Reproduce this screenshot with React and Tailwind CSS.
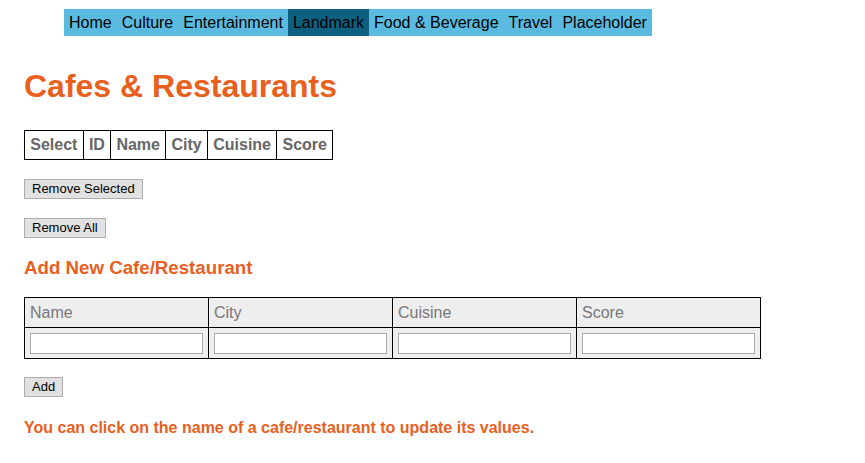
export default function App() {
  const nav = ["Home", "Culture", "Entertainment", "Landmark", "Food & Beverage", "Travel", "Placeholder"];
  const orange = "text-[#e95f1e]";
  const btn = "block h-[20px] border border-[#adadad] bg-[#e1e1e1] px-[7px] text-[13px] leading-[18px]";
  return (
    <div className="min-h-[463px] bg-white px-6 font-['Liberation_Sans',Arial,sans-serif] text-black">
      <ul className="ml-10 flex w-fit pt-[9px]">
        {nav.map((n) => (
          <li
            key={n}
            className={`h-[27px] px-[5px] text-[16px] leading-[27px] ${n === "Landmark" ? "bg-[#0f6080]" : "bg-[#5bbadf]"}`}
          >
            {n}
          </li>
        ))}
      </ul>
      <h1 className={`mt-[32px] text-[32px] font-bold leading-[37px] ${orange}`}>Cafes &amp; Restaurants</h1>
      <table className="mt-[25px] border-collapse">
        <thead>
          <tr>
            {["Select", "ID", "Name", "City", "Cuisine", "Score"].map((h) => (
              <th key={h} className="border border-black px-[5.25px] py-[5px] text-left text-[16px] font-bold leading-[18px] text-[#666666]">
                {h}
              </th>
            ))}
          </tr>
        </thead>
      </table>
      <button className={`mt-[19px] ${btn}`}>Remove Selected</button>
      <button className={`mt-[19px] ${btn}`}>Remove All</button>
      <h3 className={`mt-[19px] text-[18.7px] font-bold leading-[22px] ${orange}`}>Add New Cafe/Restaurant</h3>
      <table className="mt-[18px] w-[737px] table-fixed border-collapse">
        <thead>
          <tr className="bg-[#eeeeee]">
            {["Name", "City", "Cuisine", "Score"].map((h) => (
              <th key={h} className="h-[30px] border border-black px-[5px] text-left text-[16px] font-normal leading-[18px] text-[#777777]">
                {h}
              </th>
            ))}
          </tr>
        </thead>
        <tbody>
          <tr className="bg-[#eeeeee]">
            {[0, 1, 2, 3].map((i) => (
              <td key={i} className="h-[31px] border border-black px-[5px]">
                <input className="block h-[21px] w-[173px] border border-[#a9a9a9] bg-white" />
              </td>
            ))}
          </tr>
        </tbody>
      </table>
      <button className={`mt-[18px] ${btn}`}>Add</button>
      <p className={`mt-[22px] text-[16px] font-bold leading-[18px] ${orange}`}>
        You can click on the name of a cafe/restaurant to update its values.
      </p>
    </div>
  );
}
